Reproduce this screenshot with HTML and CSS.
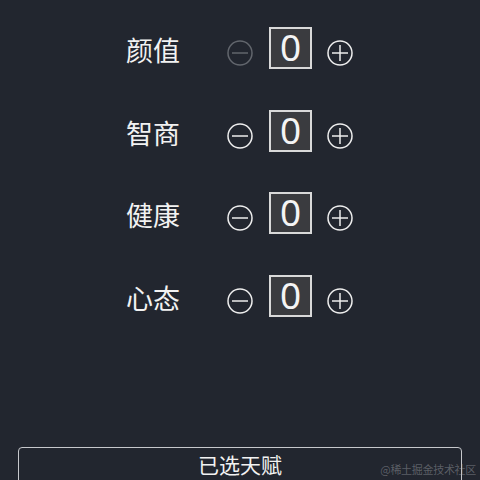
FILE: index.html
```html
<!DOCTYPE html>
<html lang="zh-CN">
<head>
<meta charset="utf-8">
<link rel="stylesheet" href="styles.css">
</head>
<body>
<div class="page">
  <div class="list">
    <div class="row">
      <span class="label">颜值</span>
      <svg class="btn disabled" viewBox="0 0 26 26"><circle cx="13" cy="13" r="12" /><line x1="5" y1="13" x2="21" y2="13" /></svg>
      <span class="box">0</span>
      <svg class="btn" viewBox="0 0 26 26"><circle cx="13" cy="13" r="12" /><line x1="5" y1="13" x2="21" y2="13" /><line x1="13" y1="5" x2="13" y2="21" /></svg>
    </div>
    <div class="row">
      <span class="label">智商</span>
      <svg class="btn" viewBox="0 0 26 26"><circle cx="13" cy="13" r="12" /><line x1="5" y1="13" x2="21" y2="13" /></svg>
      <span class="box">0</span>
      <svg class="btn" viewBox="0 0 26 26"><circle cx="13" cy="13" r="12" /><line x1="5" y1="13" x2="21" y2="13" /><line x1="13" y1="5" x2="13" y2="21" /></svg>
    </div>
    <div class="row">
      <span class="label">健康</span>
      <svg class="btn" viewBox="0 0 26 26"><circle cx="13" cy="13" r="12" /><line x1="5" y1="13" x2="21" y2="13" /></svg>
      <span class="box">0</span>
      <svg class="btn" viewBox="0 0 26 26"><circle cx="13" cy="13" r="12" /><line x1="5" y1="13" x2="21" y2="13" /><line x1="13" y1="5" x2="13" y2="21" /></svg>
    </div>
    <div class="row">
      <span class="label">心态</span>
      <svg class="btn" viewBox="0 0 26 26"><circle cx="13" cy="13" r="12" /><line x1="5" y1="13" x2="21" y2="13" /></svg>
      <span class="box">0</span>
      <svg class="btn" viewBox="0 0 26 26"><circle cx="13" cy="13" r="12" /><line x1="5" y1="13" x2="21" y2="13" /><line x1="13" y1="5" x2="13" y2="21" /></svg>
    </div>
  </div>
  <div class="selected">已选天赋</div>
  <div class="watermark">@稀土掘金技术社区</div>
</div>
</body>
</html>
```
FILE: styles.css
```css
html, body {
  margin: 0;
  padding: 0;
  background: #22262f;
  overflow: hidden;
}
.page {
  position: relative;
  width: 480px;
  height: 480px;
  overflow: hidden;
  font-family: "Noto Sans CJK SC", "Noto Sans", sans-serif;
  color: #f2f2f2;
}
.list {
  padding-top: 7px;
}
.row {
  height: 82.5px;
  display: flex;
  align-items: center;
  justify-content: center;
  padding-right: 1px;
}
.label {
  font-size: 27px;
  line-height: 30px;
  width: 54px;
  margin-top: 4px;
}
.btn {
  width: 26px;
  height: 26px;
  margin-top: 10px;
  fill: none;
  stroke: #eeeeee;
  stroke-width: 1.5;
}
.btn.disabled {
  stroke: #62666d;
}
.label + .btn {
  margin-left: 47px;
}
.box {
  box-sizing: border-box;
  width: 43px;
  height: 42px;
  margin: 0 15px 0 16px;
  border: 2px solid #d9d9d9;
  background: #3a3b3f;
  font-family: "Noto Sans", sans-serif;
  font-size: 37px;
  line-height: 36px;
  text-align: center;
  color: #f4f4f4;
}
.selected {
  box-sizing: border-box;
  margin: 110px 18px 0 18px;
  height: 60px;
  border: 1.5px solid #c6c8cc;
  border-radius: 4px;
  font-size: 21px;
  line-height: 32px;
  text-align: center;
  color: #f2f2f2;
}
.watermark {
  position: absolute;
  right: 4px;
  bottom: 3px;
  font-size: 11px;
  line-height: 15px;
  letter-spacing: -0.3px;
  color: rgba(180, 182, 188, 0.4);
}
```
